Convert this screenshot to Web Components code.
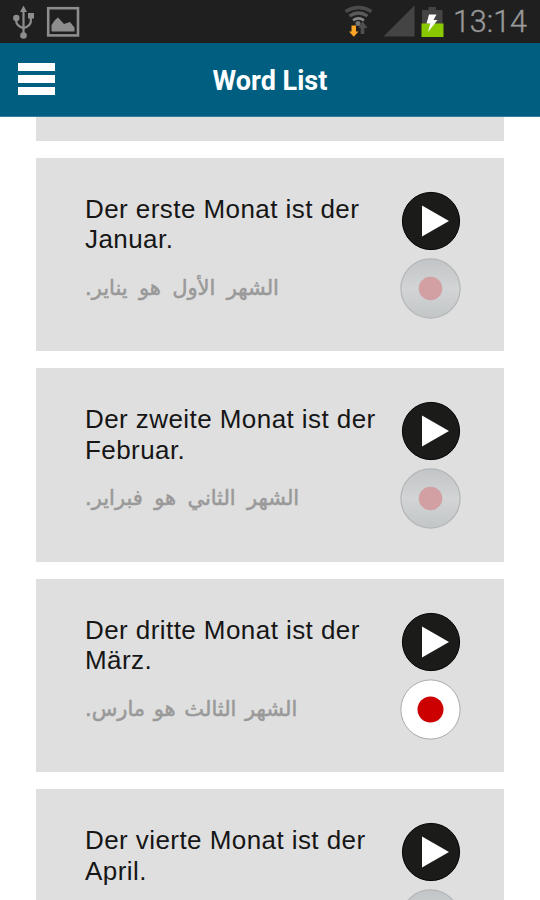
<!DOCTYPE html>
<html lang="de">
<head>
<meta charset="utf-8">
<title>Word List</title>
<style>
  body {
    margin: 0;
    height: 900px;
    overflow: hidden;
    background: #fff;
    font-family: "Liberation Sans", Arial, sans-serif;
  }
</style>
</head>
<body>
<word-app>
  <status-bar time="13:14"></status-bar>
  <title-bar>Word List</title-bar>
  <word-list>
    <word-card class="passed" empty></word-card>
    <word-card>Der erste Monat ist der Januar.<span slot="translation" lang="ar" dir="rtl">الشهر الأول هو يناير.</span></word-card>
    <word-card>Der zweite Monat ist der Februar.<span slot="translation" lang="ar" dir="rtl">الشهر الثاني هو فبراير.</span></word-card>
    <word-card recorded>Der dritte Monat ist der März.<span slot="translation" lang="ar" dir="rtl">الشهر الثالث هو مارس.</span></word-card>
    <word-card>Der vierte Monat ist der April.</word-card>
  </word-list>
</word-app>

<script>
class WordApp extends HTMLElement {
  constructor() {
    super();
    this.attachShadow({ mode: 'open' });
    this.shadowRoot.innerHTML = `
      <style>
        :host {
          display: flex;
          flex-direction: column;
          width: 540px;
          height: 900px;
          overflow: hidden;
        }
      </style>
      <slot></slot>
    `;
  }
}

class StatusBar extends HTMLElement {
  constructor() {
    super();
    this.attachShadow({ mode: 'open' });
  }

  connectedCallback() {
    this.shadowRoot.innerHTML = `
      <style>
        :host {
          display: flex;
          flex: none;
          justify-content: space-between;
          height: 43px;
          box-sizing: border-box;
          padding: 0 13px 0 12px;
          background: #1f1f1f;
        }
        .group { display: flex; }
        svg { display: block; }
        .time {
          font: 300 30.5px/43px Roboto, sans-serif;
          color: #999;
          margin-left: 8px;
          -webkit-text-stroke: .4px #999;
        }
      </style>
      <div class="group">
        <!-- usb and picture -->
        <svg width="70" height="43" viewBox="12 0 70 43">
          <g fill="none" stroke="#8d8d8d" stroke-width="2.2">
            <path d="M23.5 10V35M16.3 18V21.5Q16.3 25.5 23.5 28.2M30.8 17V21.5Q30.8 25.5 23.5 28.2"/>
          </g>
          <path fill="#8d8d8d" d="M23.5 5.5L27 12H20ZM28 13H34V18.5H28Z"/>
          <circle cx="16.3" cy="18" r="3.2" fill="#8d8d8d"/>
          <circle cx="23.5" cy="35.5" r="3.3" fill="#8d8d8d"/>
          <rect x="48.2" y="8.2" width="29.8" height="27.2" fill="none" stroke="#8d8d8d" stroke-width="2.6"/>
          <path fill="#8d8d8d" d="M51.5 31.5V25L55 20L58 17.5L64 24L70 22L74.5 27.5V31.5Z"/>
        </svg>
      </div>
      <div class="group">
        <!-- wifi, signal and battery -->
        <svg width="102" height="43" viewBox="343 0 102 43">
          <g fill="none">
            <path stroke="#4b4b4b" stroke-width="3.5" d="M345.5 11.5Q358.5 3.5 371.5 11.5"/>
            <path stroke="#5a5a5a" stroke-width="3.3" d="M349.5 16Q358.5 10 367.5 16"/>
            <path stroke="#858585" stroke-width="2.7" d="M353 20.3Q358.5 16.5 364 20.3"/>
          </g>
          <circle cx="358" cy="23.5" r="2.5" fill="#777"/>
          <path fill="#4f4f4f" d="M362.5 21L367.5 28H364.3V34H360.7V28H358.5Z"/>
          <path fill="#ffa526" d="M351.5 25.5H356V31.5H358.5L353.8 36.8L349 31.5H351.5Z"/>
          <path fill="#444" d="M414.5 5.5V36.5H383.5Z"/>
          <path fill="#444" d="M428.5 7H436V10H442.5V24H422V10H428.5Z"/>
          <rect x="421.5" y="23.5" width="22" height="13.5" fill="#8ac900"/>
          <path fill="#fff" d="M429 14.5H436.5L433.5 20H437.5L428 32L430.3 23.5H426.5Z"/>
        </svg>
        <div class="time">${this.getAttribute('time')}</div>
      </div>
    `;
  }
}

class TitleBar extends HTMLElement {
  constructor() {
    super();
    this.attachShadow({ mode: 'open' });
    this.shadowRoot.innerHTML = `
      <style>
        :host {
          display: grid;
          flex: none;
          grid-template-columns: 36px 1fr 36px;
          align-items: center;
          height: 74px;
          box-sizing: border-box;
          padding: 0 18px;
          background: #005f80;
          border-bottom: 1px solid #327d98;
        }
        .menu {
          display: flex;
          flex-direction: column;
          gap: 4px;
          padding-bottom: 1px;
        }
        .menu i {
          height: 8px;
          width: 37px;
          background: #fff;
        }
        .title {
          text-align: center;
          font: 700 27px/32px Roboto, sans-serif;
          color: #fff;
          padding-top: 3px;
        }
      </style>
      <div class="menu"><i></i><i></i><i></i></div>
      <div class="title"><slot></slot></div>
    `;
  }
}

class WordList extends HTMLElement {
  constructor() {
    super();
    this.attachShadow({ mode: 'open' });
    this.shadowRoot.innerHTML = `
      <style>
        :host {
          display: flex;
          flex: 1;
          min-height: 0;
          flex-direction: column;
          gap: 17.3px;
          padding: 0 36px;
          overflow: hidden;
        }
        /* bottom edge of the card that has scrolled under the title */
        ::slotted(.passed) { height: 23.7px; }
      </style>
      <slot></slot>
    `;
  }
}

class WordCard extends HTMLElement {
  constructor() {
    super();
    this.attachShadow({ mode: 'open' });
  }

  connectedCallback() {
    this.shadowRoot.innerHTML = `
      <style>
        :host {
          display: flex;
          flex: none;
          justify-content: space-between;
          height: 193.2px;
          box-sizing: border-box;
          padding: 0 43px 0 49px;
          background: #dfdfdf;
        }
        .text {
          width: 300px;
          padding-top: 35.6px;
        }
        .phrase {
          font-size: 26px;
          line-height: 30.5px;
          letter-spacing: .43px;
          color: #161616;
        }
        .translation {
          display: flex;
          margin-top: 18.4px;
          font: 21px/30px "DejaVu Sans", sans-serif;
          word-spacing: 4.6px;
          -webkit-text-stroke: .5px #999;
          color: #999;
          white-space: nowrap;
        }
        :host([recorded]) .translation { word-spacing: 2px; }
        .buttons {
          display: flex;
          flex-direction: column;
          align-items: center;
          gap: 7px;
          padding-top: 33px;
        }
        svg { display: block; }
      </style>
      ${this.hasAttribute('empty') ? '' : this.content()}
    `;
  }

  content() {
    return `
      <div class="text">
        <div class="phrase"><slot></slot></div>
        <div class="translation"><slot name="translation"></slot></div>
      </div>
      <div class="buttons">
        <svg width="60" height="60" viewBox="0 0 60 60">
          <circle cx="30" cy="30" r="28.6" fill="#1b1b19" stroke="#050505" stroke-width="1"/>
          <path d="M21 14.5V45.5L48 30Z" fill="#fff"/>
        </svg>
        ${this.hasAttribute('recorded') ? this.recordOn() : this.recordOff()}
      </div>
    `;
  }

  recordOn() {
    return `
      <svg width="61" height="61" viewBox="0 0 61 61">
        <circle cx="30.5" cy="30.5" r="29.6" fill="#fff" stroke="#999" stroke-width=".8"/>
        <circle cx="30.5" cy="30.5" r="13" fill="#c00"/>
      </svg>
    `;
  }

  recordOff() {
    return `
      <svg width="61" height="61" viewBox="0 0 61 61">
        <defs>
          <linearGradient id="metal" x1="0" y1="0" x2="0" y2="1">
            <stop offset="0" stop-color="#c2c5c7"/>
            <stop offset=".5" stop-color="#d2d4d5"/>
            <stop offset="1" stop-color="#c3c6c7"/>
          </linearGradient>
        </defs>
        <circle cx="30.5" cy="30.5" r="29.6" fill="url(#metal)" stroke="#b3b5b6" stroke-width="1.2"/>
        <circle cx="30.5" cy="30.5" r="11.8" fill="#d2a0a3"/>
      </svg>
    `;
  }
}

customElements.define('word-app', WordApp);
customElements.define('status-bar', StatusBar);
customElements.define('title-bar', TitleBar);
customElements.define('word-list', WordList);
customElements.define('word-card', WordCard);
</script>
</body>
</html>
